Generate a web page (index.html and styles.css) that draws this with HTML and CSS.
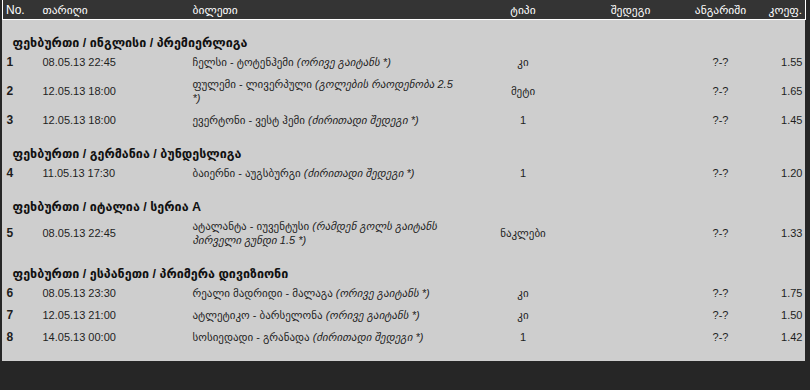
FILE: index.html
```html
<!DOCTYPE html>
<html lang="ka">
<head>
<meta charset="utf-8">
<title>ბილეთი</title>
<link rel="stylesheet" href="styles.css">
</head>
<body>
<div class="wrap">
  <table class="bets">
    <colgroup>
      <col class="c-no"><col class="c-date"><col class="c-match"><col class="c-type"><col class="c-res"><col class="c-score"><col class="c-coef">
    </colgroup>
    <thead>
      <tr>
        <th class="h-no">No.</th>
        <th class="left">თარიღი</th>
        <th class="left">ბილეთი</th>
        <th>ტიპი</th>
        <th>შედეგი</th>
        <th>ანგარიში</th>
        <th class="h-coef">კოეფ.</th>
      </tr>
    </thead>
    <tbody>
      <tr class="sec"><td colspan="7">ფეხბურთი / ინგლისი / პრემიერლიგა</td></tr>
      <tr class="row">
        <td class="no">1</td><td class="date">08.05.13 22:45</td>
        <td class="match">ჩელსი - ტოტენჰემი <em>(ორივე გაიტანს *)</em></td>
        <td class="type">კი</td><td></td><td class="score">?-?</td><td class="coef">1.55</td>
      </tr>
      <tr class="row">
        <td class="no">2</td><td class="date">12.05.13 18:00</td>
        <td class="match">ფულემი - ლივერპული <em>(გოლების რაოდენობა 2.5 *)</em></td>
        <td class="type">მეტი</td><td></td><td class="score">?-?</td><td class="coef">1.65</td>
      </tr>
      <tr class="row">
        <td class="no">3</td><td class="date">12.05.13 18:00</td>
        <td class="match">ევერტონი - ვესტ ჰემი <em>(ძირითადი შედეგი *)</em></td>
        <td class="type">1</td><td></td><td class="score">?-?</td><td class="coef">1.45</td>
      </tr>
      <tr class="sec"><td colspan="7">ფეხბურთი / გერმანია / ბუნდესლიგა</td></tr>
      <tr class="row">
        <td class="no">4</td><td class="date">11.05.13 17:30</td>
        <td class="match">ბაიერნი - აუგსბურგი <em>(ძირითადი შედეგი *)</em></td>
        <td class="type">1</td><td></td><td class="score">?-?</td><td class="coef">1.20</td>
      </tr>
      <tr class="sec"><td colspan="7">ფეხბურთი / იტალია / სერია A</td></tr>
      <tr class="row">
        <td class="no">5</td><td class="date">08.05.13 22:45</td>
        <td class="match">ატალანტა - იუვენტუსი <em>(რამდენ გოლს გაიტანს პირველი გუნდი 1.5 *)</em></td>
        <td class="type">ნაკლები</td><td></td><td class="score">?-?</td><td class="coef">1.33</td>
      </tr>
      <tr class="sec"><td colspan="7">ფეხბურთი / ესპანეთი / პრიმერა დივიზიონი</td></tr>
      <tr class="row">
        <td class="no">6</td><td class="date">08.05.13 23:30</td>
        <td class="match">რეალი მადრიდი - მალაგა <em>(ორივე გაიტანს *)</em></td>
        <td class="type">კი</td><td></td><td class="score">?-?</td><td class="coef">1.75</td>
      </tr>
      <tr class="row">
        <td class="no">7</td><td class="date">12.05.13 21:00</td>
        <td class="match">ატლეტიკო - ბარსელონა <em>(ორივე გაიტანს *)</em></td>
        <td class="type">კი</td><td></td><td class="score">?-?</td><td class="coef">1.50</td>
      </tr>
      <tr class="row">
        <td class="no">8</td><td class="date">14.05.13 00:00</td>
        <td class="match">სოსიედადი - გრანადა <em>(ძირითადი შედეგი *)</em></td>
        <td class="type">1</td><td></td><td class="score">?-?</td><td class="coef">1.42</td>
      </tr>
    </tbody>
  </table>
</div>
</body>
</html>
```
FILE: styles.css
```css
html, body {
  margin: 0;
  padding: 0;
  background: #262626;
}
body {
  font-family: "Liberation Sans", "DejaVu Sans", sans-serif;
  font-size: 11px;
  color: #1e1e1e;
}
.wrap {
  margin-left: 2px;
  width: 803px;
  background: #cecece;
  padding-bottom: 13px;
}
.bets {
  width: 803px;
  table-layout: fixed;
  border-collapse: collapse;
  border-spacing: 0;
}
.c-no { width: 36px; }
.c-date { width: 150px; }
.c-match { width: 282px; }
.c-type { width: 105px; }
.c-res { width: 110px; }
.c-score { width: 70px; }
.c-coef { width: 50px; }

.bets thead th {
  background: #343434;
  color: #ffffff;
  font-weight: normal;
  font-size: 11.5px;
  height: 19px;
  padding: 0;
  text-align: center;
  vertical-align: middle;
  border-bottom: 1px solid #ffffff;
}
.bets thead th.left {
  text-align: left;
  padding-left: 4px;
}
.bets thead th.h-no {
  text-align: left;
  padding-left: 3px;
  font-size: 12px;
  border-left: 1px solid #ffffff;
}
.bets thead th.h-coef {
  text-align: right;
  padding-right: 3px;
  border-right: 1px solid #ffffff;
}
.sec td {
  height: 14px;
  padding: 16px 0 1px 10px;
  font-weight: bold;
  font-size: 12.5px;
  line-height: 14px;
  vertical-align: bottom;
  color: #111;
}
.row td {
  height: 14px;
  padding: 4px 0;
  line-height: 14px;
  vertical-align: middle;
}
.row td.no {
  padding-left: 4px;
  font-weight: bold;
  font-size: 12px;
}
.row td.date {
  padding-left: 4px;
  font-size: 11px;
}
.row td.match {
  padding-left: 4px;
  padding-right: 14px;
  font-size: 11px;
}
.match em {
  font-style: italic;
}
.row td.type {
  text-align: center;
  font-size: 11px;
}
.row td.score {
  text-align: center;
  font-size: 11px;
}
.row td.coef {
  text-align: right;
  padding-right: 3px;
  font-size: 11px;
}
```
